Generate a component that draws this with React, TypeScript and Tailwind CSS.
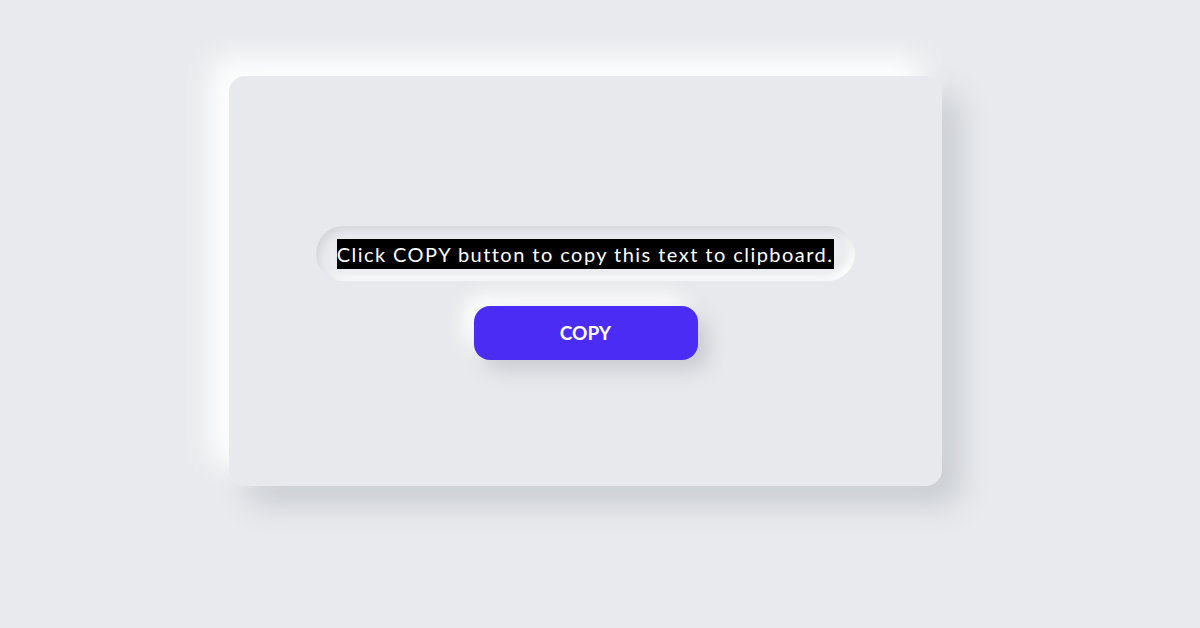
import React from "react";

export default function App() {
  return (
    <div className="w-[1200px] h-[628px] bg-[#e8eaed] pt-[76px] pl-[229px] overflow-hidden">
      <div className="w-[713px] h-[410px] rounded-[16px] bg-[#e8e9ec] shadow-[-18px_-18px_30px_#ffffff,18px_18px_30px_#c9ccd1] flex flex-col items-center pt-[150px]">
        <div className="w-[539px] h-[55px] rounded-[28px] bg-[#eaebee] shadow-[inset_4px_4px_8px_#d3d5d9,inset_-4px_-4px_8px_#ffffff] flex items-center justify-center">
          <span
            className="bg-black text-white text-[20px] leading-[30px] tracking-[1.45px] pr-[1px]"
            style={{ fontFamily: "Lato, 'Open Sans', sans-serif" }}
          >
            Click COPY button to copy this text to clipboard.
          </span>
        </div>
        <button
          className="mt-[25px] w-[224px] h-[54px] rounded-[16px] bg-[#4b2cf5] text-white text-[19px] font-bold shadow-[10px_10px_20px_#c8cbd1,-10px_-10px_20px_#ffffff]"
          style={{ fontFamily: "Lato, 'Open Sans', sans-serif" }}
        >
          COPY
        </button>
      </div>
    </div>
  );
}
